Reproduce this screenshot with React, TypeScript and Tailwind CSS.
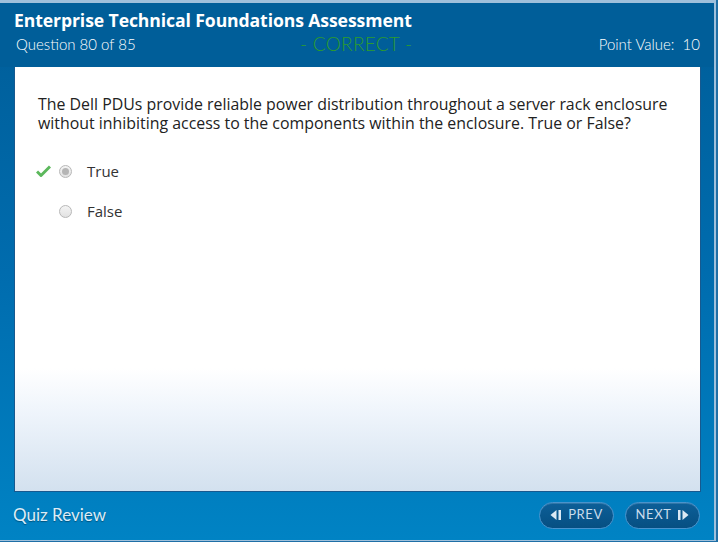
import React from 'react';

const options = [
  { label: 'True', selected: true, correct: true },
  { label: 'False', selected: false, correct: false },
];

function Radio({ selected }: { selected: boolean }) {
  return (
    <div className="w-[13px] h-[13px] rounded-full border border-[#b8b8b8] bg-gradient-to-b from-[#f4f4f4] to-[#e2e2e2] flex items-center justify-center">
      {selected && <div className="w-[7px] h-[7px] rounded-full bg-[#b5b5b5]" />}
    </div>
  );
}

function Check() {
  return (
    <svg width="15" height="12" viewBox="0 0 15 12">
      <path d="M1 6.5 L5 10.5 L14 1.5" fill="none" stroke="#5cb85c" strokeWidth="3" strokeLinejoin="round" />
    </svg>
  );
}

function NavButton({ label, dir }: { label: string; dir: 'prev' | 'next' }) {
  const icon = (
    <svg width="11" height="10" viewBox="0 0 11 10" className={dir === 'next' ? '' : 'rotate-180'}>
      <rect x="0" y="0" width="2.5" height="10" fill="#dbe9f4" />
      <path d="M4.5 0 L10.5 5 L4.5 10 Z" fill="#dbe9f4" />
    </svg>
  );
  return (
    <button className="h-[27px] w-[75px] rounded-full border border-[#4a93cc] bg-gradient-to-b from-[#0d5f98] to-[#064f82] flex items-center justify-center gap-[7px] text-[13px] text-[#c9dcec] tracking-[0.6px] shadow-[inset_0_1px_0_rgba(255,255,255,0.15)]">
      {dir === 'prev' && icon}
      <span>{label}</span>
      {dir === 'next' && icon}
    </button>
  );
}

export default function App() {
  return (
    <div className="w-[718px] h-[542px] bg-[#1f6fa6] font-['Lato',sans-serif]">
      <div className="w-[716px] h-[541px] border-t-[3px] border-r-2 border-b border-[#9fc0db] bg-gradient-to-b from-[#005d98] via-[#006cae] to-[#0083c4] flex flex-col">
        {/* header */}
        <div className="h-[64px] bg-[#005e99] px-[14px] pt-[5px] text-white">
          <div className="text-[17.6px] font-bold font-['Open_Sans',sans-serif] leading-[25px] tracking-[-0.1px]">
            Enterprise Technical Foundations Assessment
          </div>
          <div className="flex items-center mt-[2px]">
            <span className="w-[286px] text-[15px] leading-[18px] pl-[2px] font-light">Question 80 of 85</span>
            <span className="text-[19px] leading-[18px] text-[#2c9c2c] font-light tracking-[0.3px]">- CORRECT -</span>
            <span className="flex-1 text-[15px] leading-[18px] text-right font-light">Point Value:&nbsp; 10</span>
          </div>
        </div>

        {/* body */}
        <div className="ml-[14px] w-[687px] h-[425px] border-x border-b border-[#17598f] bg-[linear-gradient(to_bottom,#ffffff_0%,#ffffff_71%,#eef4fb_82%,#d3e1ef_100%)] px-[23px] pt-[28px]">
          <p className="text-[15.9px] leading-[19px] text-[#222] font-['Open_Sans',sans-serif]">
            The Dell PDUs provide reliable power distribution throughout a server rack enclosure without inhibiting access to the components within the enclosure. True or False?
          </p>
          <div className="mt-[30px] flex flex-col gap-[24px]">
            {options.map(o => (
              <div key={o.label} className="flex items-center h-[16px]">
                <div className="w-[23px] flex justify-start -ml-[2px]">{o.correct && <Check />}</div>
                <Radio selected={o.selected} />
                <span className="ml-[15px] text-[15px] text-[#333] font-['Open_Sans',sans-serif]">{o.label}</span>
              </div>
            ))}
          </div>
        </div>

        {/* footer */}
        <div className="flex-1 flex items-center justify-between pl-[13px] pr-[14px] pb-[2px]">
          <span className="text-[17px] text-[#dcecf7] [text-shadow:0_1px_1px_rgba(0,0,0,0.35)]">Quiz Review</span>
          <div className="flex gap-[11px]">
            <NavButton label="PREV" dir="prev" />
            <NavButton label="NEXT" dir="next" />
          </div>
        </div>
      </div>
    </div>
  );
}
